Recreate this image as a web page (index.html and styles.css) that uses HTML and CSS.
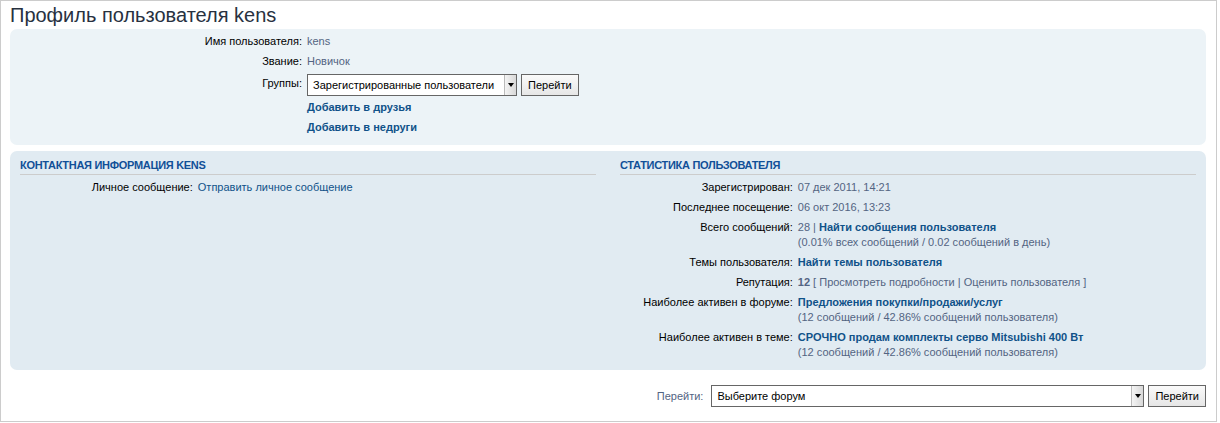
FILE: index.html
```html
<!DOCTYPE html>
<html>
<head>
    <meta charset="utf-8">
    <title>Профиль пользователя kens</title>
    <link rel="stylesheet" href="styles.css">
</head>
<body>
    <div class="wrap">
        <h2 class="page-title">Профиль пользователя kens</h2>

        <div class="panel bg1">
            <dl class="details top-details">
                <dt>Имя пользователя:</dt>
                <dd><span class="val">kens</span></dd>
                <dt>Звание:</dt>
                <dd><span class="val">Новичок</span></dd>
                <dt class="group-label">Группы:</dt>
                <dd class="group-row">
                    <div class="select-box" style="width: 208px;">
                        <select><option>Зарегистрированные пользователи</option></select>
                        <span class="arrow"></span>
                    </div>
                    <button class="go-button">Перейти</button>
                </dd>
                <dt></dt>
                <dd class="action first"><a href="#" class="strong">Добавить в друзья</a></dd>
                <dt></dt>
                <dd class="action"><a href="#" class="strong">Добавить в недруги</a></dd>
            </dl>
        </div>

        <div class="panel bg2">
            <div class="columns">
                <div class="column">
                    <h3>Контактная информация kens</h3>
                    <dl class="details">
                        <dt>Личное сообщение:</dt>
                        <dd><a href="#">Отправить личное сообщение</a></dd>
                    </dl>
                </div>
                <div class="column">
                    <h3>Статистика пользователя</h3>
                    <dl class="details">
                        <dt>Зарегистрирован:</dt>
                        <dd><span class="val">07 дек 2011, 14:21</span></dd>
                        <dt>Последнее посещение:</dt>
                        <dd><span class="val">06 окт 2016, 13:23</span></dd>
                        <dt>Всего сообщений:</dt>
                        <dd><span class="val">28 |</span> <a href="#" class="strong">Найти сообщения пользователя</a><br><span class="val">(0.01% всех сообщений / 0.02 сообщений в день)</span></dd>
                        <dt>Темы пользователя:</dt>
                        <dd><a href="#" class="strong">Найти темы пользователя</a></dd>
                        <dt>Репутация:</dt>
                        <dd><span class="val"><b>12</b> [ <a href="#">Просмотреть подробности</a> | <a href="#">Оценить пользователя</a> ]</span></dd>
                        <dt>Наиболее активен в форуме:</dt>
                        <dd><a href="#" class="strong">Предложения покупки/продажи/услуг</a><br><span class="val">(12 сообщений / 42.86% сообщений пользователя)</span></dd>
                        <dt>Наиболее активен в теме:</dt>
                        <dd><a href="#" class="strong">СРОЧНО продам комплекты серво Mitsubishi 400 Вт</a><br><span class="val">(12 сообщений / 42.86% сообщений пользователя)</span></dd>
                    </dl>
                </div>
            </div>
        </div>

        <div class="jumpbox">
            <label>Перейти:</label>
            <div class="select-box" style="width: 431px;">
                <select><option>Выберите форум</option></select>
                <span class="arrow"></span>
            </div>
            <button class="go-button">Перейти</button>
        </div>
    </div>
</body>
</html>
```

FILE: styles.css
```css
body {
    margin: 0;
    font-family: "Liberation Sans", Arial, Helvetica, sans-serif;
    font-size: 11px;
    color: #000;
    background: #fff;
}

.wrap {
    width: 1196px;
    border: 1px solid #ccc;
    padding: 0 10px 0 9px;
}

.page-title {
    margin: 0 0 1px;
    padding-top: 2px;
    font-size: 20px;
    line-height: 25px;
    font-weight: normal;
    color: #28313f;
}

.panel {
    border-radius: 7px;
    padding: 5px 10px 10px;
    margin-bottom: 6px;
}

.bg1 {
    background: #ecf3f7;
}

.bg2 {
    background: #e1ebf2;
    padding-top: 8px;
}

a {
    color: #105289;
    text-decoration: none;
}

a.strong {
    font-weight: bold;
}

.val {
    color: #536482;
}

.val a {
    color: #536482;
}

.details {
    display: grid;
    grid-template-columns: 30% 1fr;
    column-gap: 5px;
    row-gap: 5px;
    margin: 0;
    line-height: 15px;
}

.top-details {
    grid-template-columns: 282px 1fr;
}

.details dt {
    text-align: right;
}

.details dd {
    margin: 0;
}

.group-label {
    padding-top: 2px;
}

.group-row {
    display: flex;
    gap: 4px;
    height: 22px;
}

.details .action {
    margin-top: 0;
}

.details .action.first {
    margin-top: -1px;
}

.columns {
    display: grid;
    grid-template-columns: 1fr 1fr;
    gap: 24px;
}

h3 {
    margin: 0 0 5px;
    font-size: 11px;
    line-height: 13px;
    text-transform: uppercase;
    color: #115098;
    letter-spacing: -0.3px;
    padding-bottom: 2px;
    border-bottom: 1px solid #ccc;
}

.select-box {
    display: flex;
    height: 20px;
    border: 1px solid #666;
    background: #fff;
}

.select-box select {
    flex: 1;
    appearance: none;
    border: none;
    outline: none;
    background: #fff;
    font-family: inherit;
    font-size: 11px;
    padding: 0 5px;
    color: #000;
    min-width: 0;
}

.arrow {
    width: 11px;
    border-left: 1px solid #bbb;
    background: linear-gradient(to right, #f4f4f4, #d8d8d8);
    display: flex;
    align-items: center;
    justify-content: center;
}

.arrow::after {
    content: "";
    border-left: 3px solid transparent;
    border-right: 3px solid transparent;
    border-top: 4px solid #000;
}

.go-button {
    height: 22px;
    padding: 0 6px;
    border: 1px solid #666;
    background: linear-gradient(to bottom, #fafafa, #e6e6e6);
    font-family: inherit;
    font-size: 11px;
    color: #000;
}

.jumpbox {
    display: flex;
    justify-content: flex-end;
    align-items: flex-start;
    gap: 4px;
    margin: 15px 0 0;
    height: 36px;
}

.jumpbox label {
    color: #536482;
    line-height: 22px;
    margin-right: 4px;
}
```
